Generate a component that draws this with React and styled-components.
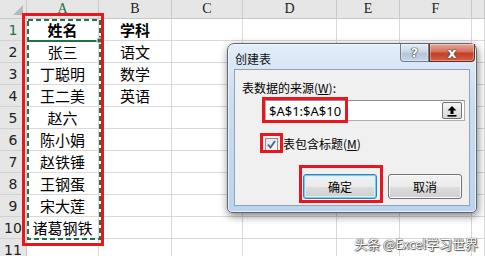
import React from 'react'
import styled, { createGlobalStyle } from 'styled-components'

const GlobalStyle = createGlobalStyle`
  html, body { margin: 0; padding: 0; background: #fff; }
  body { width: 485px; height: 256px; overflow: hidden; }
`

// column widths in px: row header, A..F, and a sliver of G
const COLS = [27, 72, 73, 71, 94, 63, 72, 13]
const LETTERS = ['A', 'B', 'C', 'D', 'E', 'F', '']
const ROWS = [
  ['姓名', '学科'],
  ['张三', '语文'],
  ['丁聪明', '数学'],
  ['王二美', '英语'],
  ['赵六'],
  ['陈小娟'],
  ['赵铁锤'],
  ['王钢蛋'],
  ['宋大莲'],
  ['诸葛钢铁'],
  [],
]

const Sheet = styled.div`
  position: relative;
  width: 485px;
  height: 256px;
  overflow: hidden;
  font-family: 'Noto Sans CJK SC', sans-serif;
`

const Grid = styled.div`
  display: grid;
  grid-template-columns: ${COLS.map((c) => c + 'px').join(' ')};
  grid-template-rows: 19px repeat(11, 22px);
`

const Corner = styled.div`
  position: relative;
  box-sizing: border-box;
  background: #e6e6e6;
  border-right: 1px solid #c9c9c9;
  border-bottom: 1px solid #c9c9c9;
  &::after {
    content: '';
    position: absolute;
    right: 3px;
    bottom: 3px;
    border-left: 10px solid transparent;
    border-bottom: 10px solid #b9b9b9;
  }
`

const ColHead = styled.div`
  box-sizing: border-box;
  background: #e6e6e6;
  border-right: 1px solid #c9c9c9;
  border-bottom: 1px solid #c9c9c9;
  display: flex;
  align-items: center;
  justify-content: center;
  font-family: 'Liberation Serif', serif;
  font-size: 14px;
  color: ${(p) => (p.$active ? '#217346' : '#222')};
`

const RowHead = styled.div`
  box-sizing: border-box;
  background: #e6e6e6;
  border-right: 1px solid #c9c9c9;
  border-bottom: 1px solid #d2d2d2;
  display: flex;
  align-items: center;
  justify-content: center;
  font-family: 'DejaVu Sans', sans-serif;
  font-size: 14px;
  color: ${(p) => (p.$active ? '#217346' : '#222')};
`

const Cell = styled.div`
  box-sizing: border-box;
  border-right: 1px solid #d9d9d9;
  border-bottom: 1px solid #d9d9d9;
  display: flex;
  align-items: center;
  justify-content: center;
  font-size: 15px;
  font-weight: ${(p) => (p.$bold ? 700 : 400)};
  color: #000;
  white-space: nowrap;
`

// copy marquee around A1:A10
const Ants = styled.svg`
  position: absolute;
  left: 26px;
  top: 18px;
`

// red annotation frames drawn over the screenshot
const RedBox = styled.div`
  position: absolute;
  left: ${(p) => p.$x}px;
  top: ${(p) => p.$y}px;
  width: ${(p) => p.$w}px;
  height: ${(p) => p.$h}px;
  box-sizing: border-box;
  border: 3px solid #e8161f;
`

const Window = styled.div`
  position: absolute;
  left: 227px;
  top: 43px;
  width: 250px;
  height: 170px;
  box-sizing: border-box;
  border: 1px solid #5e6975;
  border-radius: 7px 7px 5px 5px;
  background: linear-gradient(#e3edf9, #cadcf0 35%, #bdd4ee);
  box-shadow: 1px 3px 9px rgba(0, 0, 0, 0.5), inset 0 0 0 1px rgba(255, 255, 255, 0.6);
  padding: 0 6px 6px 6px;
  display: flex;
  flex-direction: column;
  font-family: 'Noto Sans CJK SC', sans-serif;
  font-size: 12px;
`

const TitleBar = styled.div`
  height: 25px;
  display: flex;
  justify-content: space-between;
  align-items: flex-start;
`

const Title = styled.div`
  padding: 6px 0 0 1px;
  color: #111;
`

const CaptionButtons = styled.div`
  display: flex;
  margin-right: -5px;
`

const CaptionButton = styled.div`
  width: ${(p) => p.$w}px;
  height: 18px;
  box-sizing: border-box;
  border: 1px solid ${(p) => (p.$close ? '#6b2a20' : '#6f7d8c')};
  border-top: none;
  border-radius: ${(p) => (p.$close ? '0 0 4px 0' : '0 0 0 4px')};
  background: ${(p) =>
    p.$close
      ? 'linear-gradient(#e9a99b, #d4705c 45%, #c43f27 55%, #d25e44)'
      : 'linear-gradient(#e4ecf5, #ccd8e5 45%, #b6c6d8 55%, #c6d6e8)'};
  box-shadow: inset 0 0 0 1px rgba(255, 255, 255, 0.35);
  display: flex;
  align-items: center;
  justify-content: center;
  color: #fff;
  font-family: 'DejaVu Sans', sans-serif;
  font-weight: 700;
  font-size: ${(p) => (p.$close ? 14 : 13)}px;
  line-height: 1;
  text-shadow: 0 0 1px #333, 0 0 1px #333, 0 0 1px #333;
`

const Client = styled.div`
  flex: 1;
  background: #f0f0f0;
  border: 1px solid #8ea3ba;
  display: flex;
  flex-direction: column;
`

const Label = styled.div`
  margin: 10px 0 0 7px;
  line-height: 16px;
  color: #000;
`

const RefEdit = styled.div`
  margin: 4px 0 0 30px;
  width: 200px;
  height: 21px;
  box-sizing: border-box;
  border: 1px solid #abadb3;
  border-top-color: #8d9096;
  background: #fff;
  display: flex;
  align-items: center;
  justify-content: space-between;
  padding: 0 2px 0 3px;
  font-family: 'Noto Sans', sans-serif;
  font-size: 13px;
  color: #000;
`

const PickButton = styled.div`
  width: 20px;
  height: 17px;
  box-sizing: border-box;
  border: 1px solid #707070;
  border-radius: 2px;
  background: linear-gradient(#f6f6f6, #e6e6e6 50%, #d8d8d8);
  display: flex;
  align-items: center;
  justify-content: center;
`

const CheckRow = styled.label`
  margin: 15px 0 0 30px;
  display: flex;
  align-items: center;
  gap: 5px;
  color: #000;
  line-height: 16px;
`

const Box = styled.div`
  width: 13px;
  height: 13px;
  box-sizing: border-box;
  border: 1px solid #8e8f8f;
  background: linear-gradient(135deg, #e2e4e8, #fafafa);
  display: flex;
  align-items: center;
  justify-content: center;
`

const ButtonRow = styled.div`
  margin: 22px 0 0 68px;
  display: flex;
  gap: 11px;
`

const Button = styled.div`
  width: 74px;
  height: 25px;
  box-sizing: border-box;
  border: 1px solid ${(p) => (p.$default ? '#3c7fb1' : '#707070')};
  border-radius: 3px;
  background: linear-gradient(#f2f2f2, #ebebeb 50%, #dddddd 51%, #cfcfcf);
  box-shadow: ${(p) =>
    p.$default ? 'inset 0 0 0 1px #6fd1f2, inset 0 0 0 2px #d8f1fb' : 'inset 0 0 0 1px #fcfcfc'};
  display: flex;
  align-items: center;
  justify-content: center;
  color: #000;
`

const Watermark = styled.div`
  position: absolute;
  right: 7px;
  bottom: 4px;
  font-family: 'Noto Sans CJK SC', sans-serif;
  font-size: 13px;
  line-height: 16px;
  color: #fff;
  text-shadow: 0 0 1px #3a3a3a, 0 0 1px #3a3a3a, 1px 1px 1px #555;
  white-space: nowrap;
`

const UpArrow = () => (
  <svg width="12" height="12" viewBox="0 0 12 12">
    <path d="M6 1 L10.5 5.5 H7.5 V9 H4.5 V5.5 H1.5 Z" fill="#000" />
    <rect x="1.5" y="10" width="9" height="1.6" fill="#000" />
  </svg>
)

const Tick = () => (
  <svg width="9" height="9" viewBox="0 0 9 9">
    <path d="M1 4.5 L3.5 7.5 L8 1" fill="none" stroke="#4a5f97" strokeWidth="1.8" />
  </svg>
)

const App = () => (
  <>
    <GlobalStyle />
    <Sheet>
      <Grid>
        <Corner />
        {LETTERS.map((l, i) => (
          <ColHead key={'c' + i} $active={i === 0}>
            {l}
          </ColHead>
        ))}
        {ROWS.map((row, r) => (
          <React.Fragment key={r}>
            <RowHead $active={r === 0}>{r + 1}</RowHead>
            {LETTERS.map((_, c) => (
              <Cell key={c} $bold={r === 0}>
                {row[c] || ''}
              </Cell>
            ))}
          </React.Fragment>
        ))}
      </Grid>

      <Ants width="76" height="224" viewBox="0 0 76 224">
        <rect x="2" y="2" width="72" height="219" fill="none" stroke="#217346" strokeWidth="2" strokeDasharray="5 3" />
        <line x1="1" y1="23" x2="74" y2="23" stroke="#217346" strokeWidth="2" />
        <rect x="71" y="20" width="5" height="5" fill="#217346" stroke="#fff" strokeWidth="1" />
      </Ants>

      <RedBox $x={22} $y={13} $w={82} $h={233} />

      <Window>
        <TitleBar>
          <Title>创建表</Title>
          <CaptionButtons>
            <CaptionButton $w={29}>?</CaptionButton>
            <CaptionButton $w={46} $close>
              x
            </CaptionButton>
          </CaptionButtons>
        </TitleBar>
        <Client>
          <Label>
            表数据的来源(<u>W</u>):
          </Label>
          <RefEdit>
            <span>$A$1:$A$10</span>
            <PickButton>
              <UpArrow />
            </PickButton>
          </RefEdit>
          <CheckRow>
            <Box>
              <Tick />
            </Box>
            <span>
              表包含标题(<u>M</u>)
            </span>
          </CheckRow>
          <ButtonRow>
            <Button $default>确定</Button>
            <Button>取消</Button>
          </ButtonRow>
        </Client>
      </Window>

      <RedBox $x={262} $y={97} $w={86} $h={26} />
      <RedBox $x={260} $y={133} $w={23} $h={20} />
      <RedBox $x={299} $y={165} $w={84} $h={38} />

      <Watermark>头条 @Excel学习世界</Watermark>
    </Sheet>
  </>
)

export default App
